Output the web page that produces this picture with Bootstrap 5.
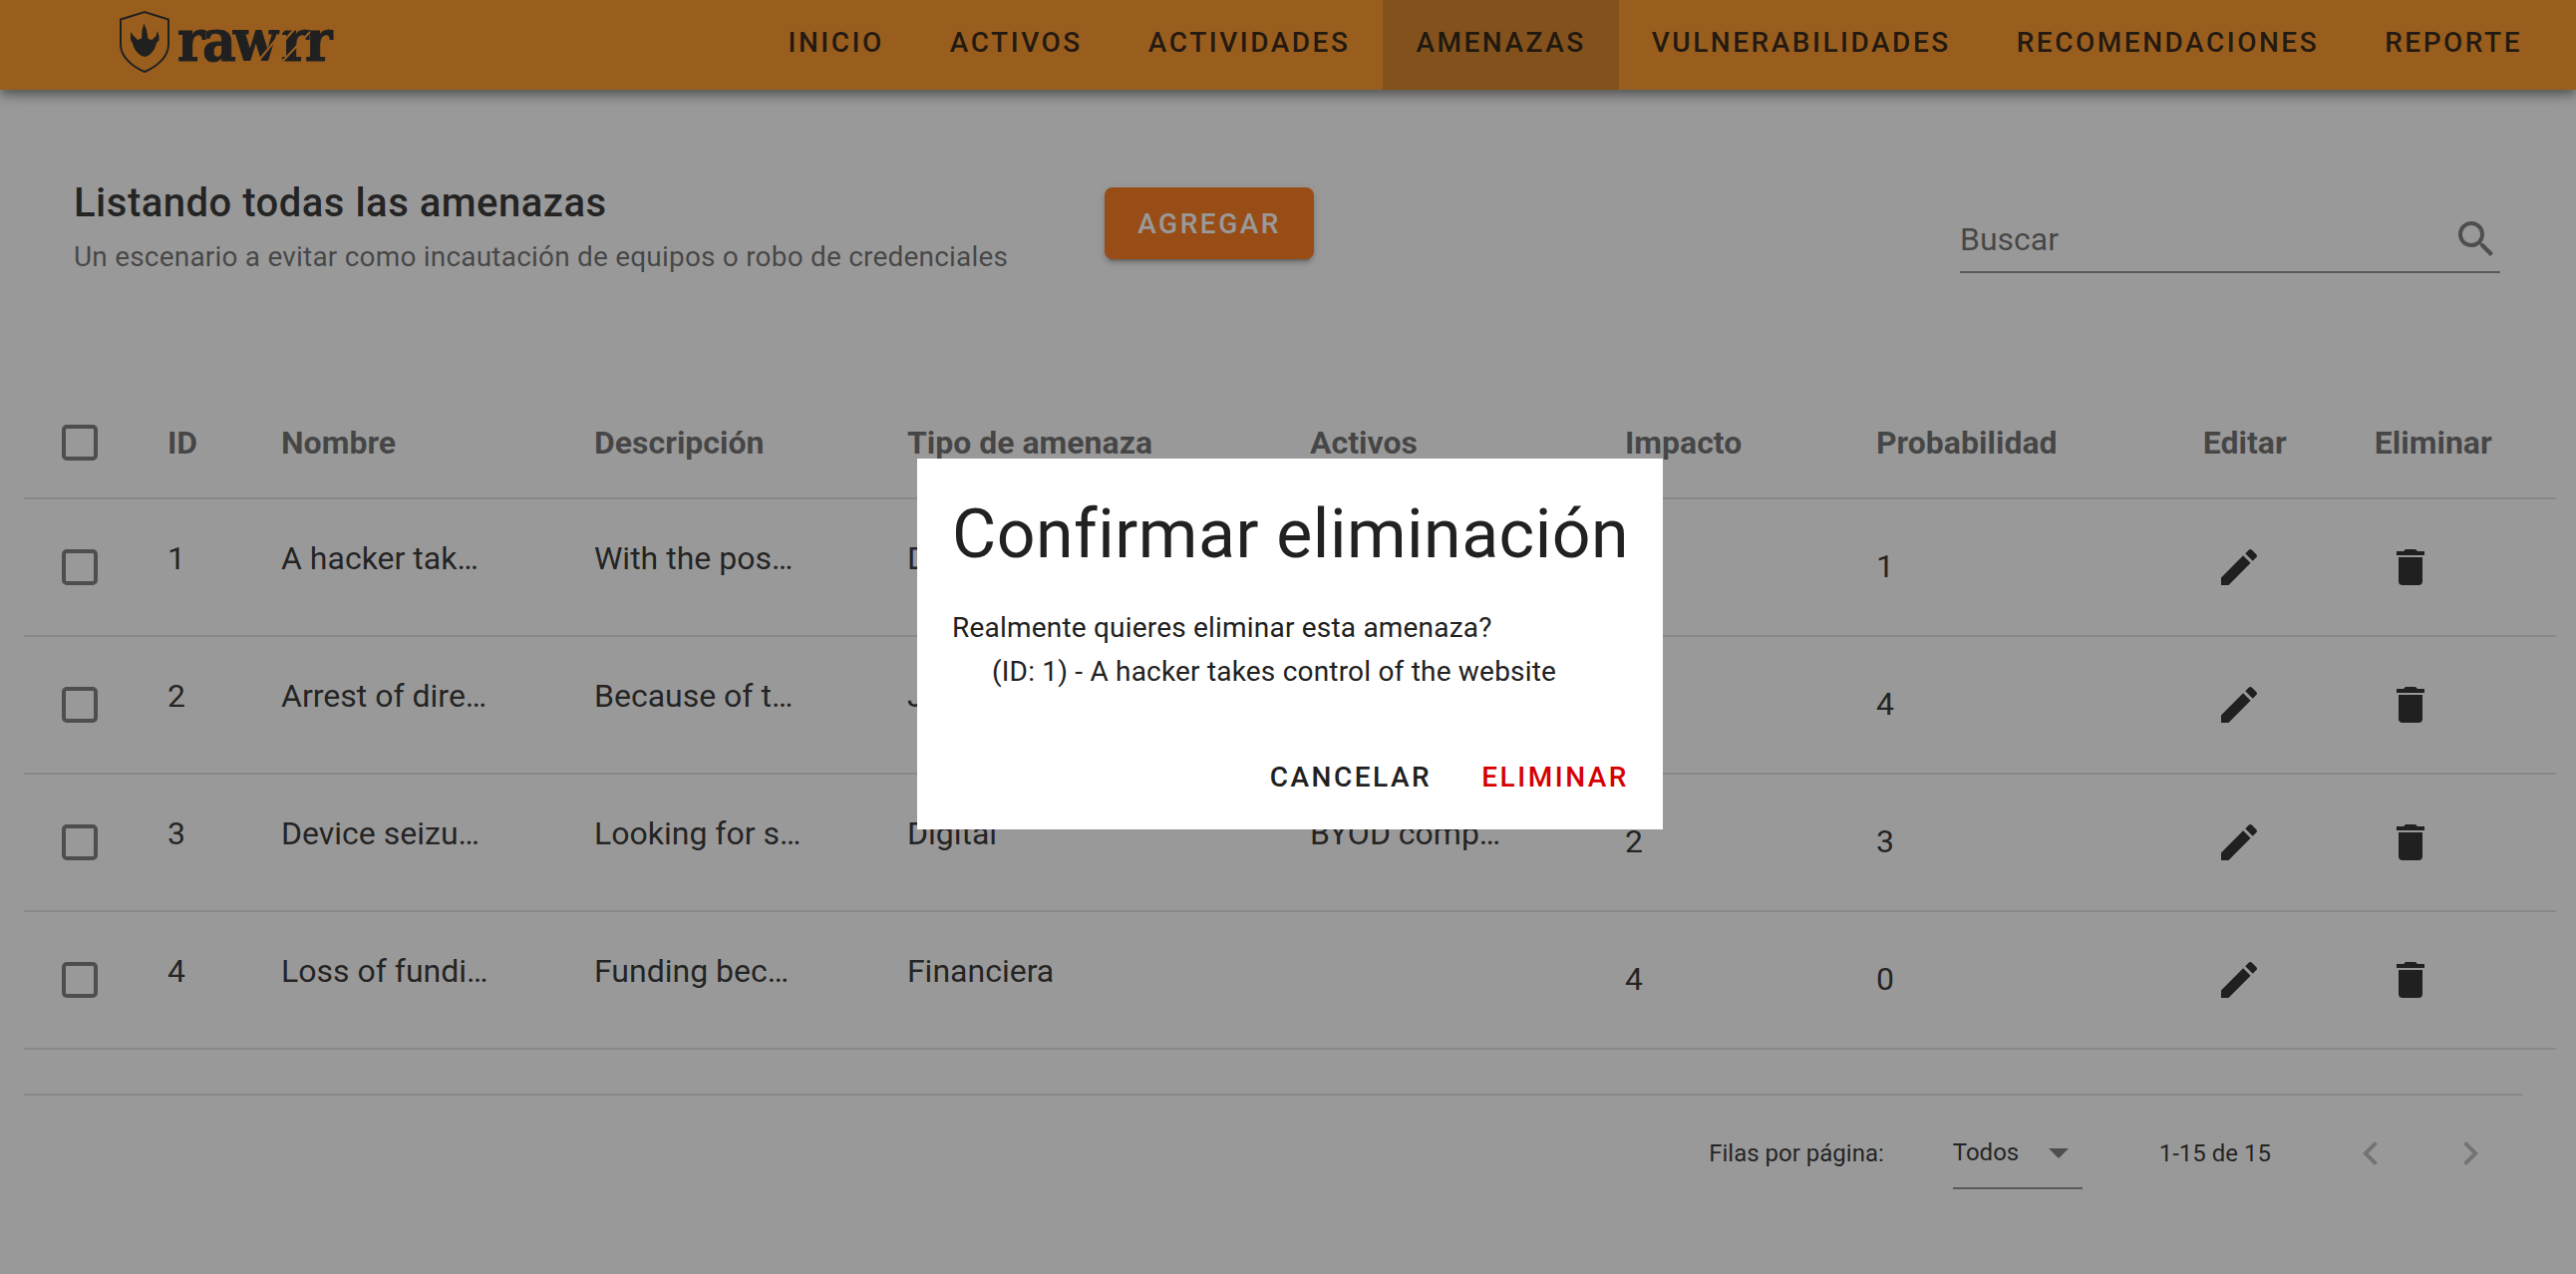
<!DOCTYPE html>
<html lang="es">
<head>
<meta charset="utf-8">
<meta name="viewport" content="width=device-width, initial-scale=1">
<title>Rawrr - Amenazas</title>
<link href="https://cdn.jsdelivr.net/npm/bootstrap@5.3.0/dist/css/bootstrap.min.css" rel="stylesheet">
<style>
  :root { --ink: #212121; --muted: rgba(0, 0, 0, .6); --bar: #ff921c; }
  body { font-family: Roboto, "Liberation Sans", sans-serif; font-size: 32px; line-height: 48px; color: rgba(0, 0, 0, .87); background: #fff; }
  svg.mdi { width: 48px; height: 48px; fill: currentColor; display: block; flex: none; }

  /* top bar */
  .app-bar { background: var(--bar); height: 90px; padding: 0 21px 0 112px; box-shadow: 0 4px 8px -2px rgba(0, 0, 0, .3), 0 8px 10px rgba(0, 0, 0, .2), 0 2px 20px rgba(0, 0, 0, .16); }
  .brand-logo { width: 230px; height: 90px; display: block; }
  .brand-word { font-family: "DejaVu Serif Condensed", "DejaVu Serif", serif; font-stretch: condensed; font-weight: 700; font-size: 58px; }
  .caps { font-size: 28px; line-height: 36px; font-weight: 500; letter-spacing: .09em; text-transform: uppercase; }
  .app-bar .nav-link { color: rgba(0, 0, 0, .87); padding: 25px 33px 29px; }
  .app-bar .nav-link.active { background: rgba(0, 0, 0, .16); }

  /* heading row */
  .list-head { padding: 82px 76px 0 74px; height: 280px; }
  .list-title { font-size: 40px; line-height: 64px; font-weight: 500; letter-spacing: .0125em; }
  .list-sub { font-size: 28px; line-height: 44px; color: var(--muted); letter-spacing: .0071em; }
  .btn-add, .btn-add:hover { background: #fd730f; color: #fff; border: 0; border-radius: 8px; padding: 19px 33px 17px; margin: 16px 0 0 97px; box-shadow: 0 6px 2px -4px rgba(0, 0, 0, .2), 0 4px 4px rgba(0, 0, 0, .14), 0 2px 10px rgba(0, 0, 0, .12); }
  .search-box { width: 542px; height: 86px; border-bottom: 2px solid rgba(0, 0, 0, .46); color: rgba(0, 0, 0, .54); padding-top: 20px; margin: 16px 0 0 auto; }
  .search-box input { border: 0; outline: 0; background: none; padding: 0; min-width: 0; font-size: 32px; line-height: 48px; }
  .search-box input::placeholder { color: var(--muted); opacity: 1; }

  /* listing */
  .list-wrap { padding: 20px 20px 0 24px; }
  .threats { table-layout: fixed; width: 100%; }
  .threats th, .threats td { padding: 0 0 0 32px; border-bottom: 2px solid rgba(0, 0, 0, .12); white-space: nowrap; vertical-align: middle; }
  .threats th { height: 110px; padding-bottom: 2px; color: var(--muted); font-weight: 700; }
  .threats td { height: 138px; }
  .threats td.txt { padding-bottom: 18px; }
  .threats td.num { padding-bottom: 2px; }
  .tick { appearance: none; display: block; width: 36px; height: 36px; margin: 0 0 0 6px; border: 4px solid rgba(0, 0, 0, .54); border-radius: 5px; }
  .icon-btn { border: 0; background: none; padding: 0 12px; color: inherit; display: block; }

  .pager { margin: 44px 34px 0 0; border-top: 2px solid rgba(0, 0, 0, .12); font-size: 24px; line-height: 36px; padding: 22px 28px 0 0; }
  .page-size { width: 130px; height: 72px; border-bottom: 2px solid rgba(0, 0, 0, .46); margin: 0 77px 0 69px; }
  .page-size select { appearance: none; border: 0; background: none; padding: 0; flex: 1; min-width: 0; color: inherit; font-size: 24px; line-height: 36px; }
  .page-size svg { color: rgba(0, 0, 0, .54); }
  .pager-nav { gap: 52px; margin-left: 76px; }
  .pager .icon-btn { padding: 0; color: rgba(0, 0, 0, .27); }

  /* confirmation dialog */
  .modal-backdrop.show { background: #212121; opacity: .46; }
  .modal { padding: 14px 0 0 4px; }
  .modal-dialog { max-width: 748px; }
  .modal-content { border: 0; border-radius: 0; color: var(--ink); padding: 34px 34px 34px 35px; }
  .confirm-title { font-size: 68px; line-height: 84px; font-weight: 400; letter-spacing: .0073em; margin: 0 0 30px; white-space: nowrap; }
  .confirm-text { font-size: 28px; line-height: 44px; letter-spacing: .0071em; }
  .confirm-item { padding-left: 40px; }
  .confirm-actions { gap: 50px; margin-top: 66px; }
  .confirm-actions button { border: 0; background: none; padding: 0; color: var(--ink); }
  .confirm-actions .danger { color: #d50000; }
</style>
<script src="https://cdn.jsdelivr.net/npm/bootstrap@5.3.0/dist/js/bootstrap.bundle.min.js"></script>
</head>
<body>
<svg class="d-none" aria-hidden="true">
  <symbol id="i-pencil" viewBox="0 0 24 24"><path d="M20.71,7.04C21.1,6.65 21.1,6 20.71,5.63L18.37,3.29C18,2.9 17.35,2.9 16.96,3.29L15.12,5.12L18.87,8.87M3,17.25V21H6.75L17.81,9.93L14.06,6.18L3,17.25Z"/></symbol>
  <symbol id="i-delete" viewBox="0 0 24 24"><path d="M19,4H15.5L14.5,3H9.5L8.5,4H5V6H19M6,19A2,2 0 0,0 8,21H16A2,2 0 0,0 18,19V7H6V19Z"/></symbol>
</svg>

<header>
  <nav class="app-bar d-flex justify-content-between align-items-start">
    <a href="#" aria-label="rawrr">
      <svg class="brand-logo" viewBox="0 0 230 90">
        <path d="M9 19.500L33 12L57 19.500V45C57 57 45 67 33 72C21 67 9 57 9 45Z" fill="none" stroke="#212121" stroke-width="2"/>
        <path d="M32.500 23.500L35 30L36.500 39L40.500 40L44.500 36L46 31L47.500 36L47.500 40.500L45 43C43.500 50 39 56 33 57C27 56 22 49 21 43.500L19 40L19 32L22 36L26 40L30 38.500L30.500 30Z" fill="#212121"/>
        <text class="brand-word" x="66 91 122 170 194" y="61" fill="#212121" stroke="#212121" stroke-width="1">rawrr</text>
        <path d="M148 60L176 26M166 49L187 25M171 62L199 32" stroke="#ff921c" stroke-width="2"/>
      </svg>
    </a>
    <ul class="nav flex-nowrap">
      <li><a class="nav-link caps" href="#">Inicio</a></li>
      <li><a class="nav-link caps" href="#">Activos</a></li>
      <li><a class="nav-link caps" href="#">Actividades</a></li>
      <li><a class="nav-link caps active" href="#">Amenazas</a></li>
      <li><a class="nav-link caps" href="#">Vulnerabilidades</a></li>
      <li><a class="nav-link caps" href="#">Recomendaciones</a></li>
      <li><a class="nav-link caps" href="#">Reporte</a></li>
    </ul>
  </nav>
</header>

<main>
  <section class="list-head d-flex align-items-start">
    <div>
      <h1 class="list-title mb-0">Listando todas las amenazas</h1>
      <p class="list-sub mb-0">Un escenario a evitar como incautación de equipos o robo de credenciales</p>
    </div>
    <button type="button" class="btn btn-add caps">Agregar</button>
    <div class="search-box d-flex align-items-center">
      <input class="flex-grow-1" type="search" placeholder="Buscar" aria-label="Buscar">
      <svg class="mdi" viewBox="0 0 24 24"><path d="M9.500,3A6.500,6.500 0 0,1 16,9.500C16,11.110 15.410,12.590 14.440,13.730L14.710,14H15.500L20.500,19L19,20.500L14,15.500V14.710L13.730,14.440C12.590,15.410 11.110,16 9.500,16A6.500,6.500 0 0,1 3,9.500A6.500,6.500 0 0,1 9.500,3M9.500,5C7,5 5,7 5,9.500C5,12 7,14 9.500,14C12,14 14,12 14,9.500C14,7 12,5 9.500,5Z"/></svg>
    </div>
  </section>

  <section class="list-wrap">
    <table class="threats">
      <colgroup>
        <col style="width:4.41%"><col style="width:4.49%"><col style="width:12.36%"><col style="width:12.36%"><col style="width:15.91%"><col style="width:12.44%"><col style="width:9.92%"><col style="width:12.91%"><col style="width:6.77%"><col>
      </colgroup>
      <thead>
        <tr><th><input class="tick" type="checkbox" aria-label="Seleccionar todas"></th><th>ID</th><th>Nombre</th><th>Descripción</th><th>Tipo de amenaza</th><th>Activos</th><th>Impacto</th><th>Probabilidad</th><th>Editar</th><th>Eliminar</th></tr>
      </thead>
      <tbody>
        <tr>
          <td><input class="tick" type="checkbox" aria-label="Seleccionar 1"></td>
          <td class="txt">1</td><td class="txt">A hacker tak…</td><td class="txt">With the pos…</td><td class="txt">Digital</td><td class="txt"></td><td class="num"></td><td class="num">1</td>
          <td><button type="button" class="icon-btn" aria-label="Editar 1"><svg class="mdi"><use href="#i-pencil"/></svg></button></td>
          <td><button type="button" class="icon-btn" aria-label="Eliminar 1"><svg class="mdi"><use href="#i-delete"/></svg></button></td>
        </tr>
        <tr>
          <td><input class="tick" type="checkbox" aria-label="Seleccionar 2"></td>
          <td class="txt">2</td><td class="txt">Arrest of dire…</td><td class="txt">Because of t…</td><td class="txt">Jurídica</td><td class="txt"></td><td class="num"></td><td class="num">4</td>
          <td><button type="button" class="icon-btn" aria-label="Editar 2"><svg class="mdi"><use href="#i-pencil"/></svg></button></td>
          <td><button type="button" class="icon-btn" aria-label="Eliminar 2"><svg class="mdi"><use href="#i-delete"/></svg></button></td>
        </tr>
        <tr>
          <td><input class="tick" type="checkbox" aria-label="Seleccionar 3"></td>
          <td class="txt">3</td><td class="txt">Device seizu…</td><td class="txt">Looking for s…</td><td class="txt">Digital</td><td class="txt">BYOD comp…</td><td class="num">2</td><td class="num">3</td>
          <td><button type="button" class="icon-btn" aria-label="Editar 3"><svg class="mdi"><use href="#i-pencil"/></svg></button></td>
          <td><button type="button" class="icon-btn" aria-label="Eliminar 3"><svg class="mdi"><use href="#i-delete"/></svg></button></td>
        </tr>
        <tr>
          <td><input class="tick" type="checkbox" aria-label="Seleccionar 4"></td>
          <td class="txt">4</td><td class="txt">Loss of fundi…</td><td class="txt">Funding bec…</td><td class="txt">Financiera</td><td class="txt"></td><td class="num">4</td><td class="num">0</td>
          <td><button type="button" class="icon-btn" aria-label="Editar 4"><svg class="mdi"><use href="#i-pencil"/></svg></button></td>
          <td><button type="button" class="icon-btn" aria-label="Eliminar 4"><svg class="mdi"><use href="#i-delete"/></svg></button></td>
        </tr>
      </tbody>
    </table>

    <div class="pager d-flex justify-content-end align-items-center">
      <label for="page-size">Filas por página:</label>
      <div class="page-size d-flex align-items-center">
        <select id="page-size"><option>Todos</option></select>
        <svg class="mdi" viewBox="0 0 24 24"><path d="M7,10L12,15L17,10H7Z"/></svg>
      </div>
      <span>1-15 de 15</span>
      <div class="pager-nav d-flex">
        <button type="button" class="icon-btn" disabled aria-label="Página anterior"><svg class="mdi" viewBox="0 0 24 24"><path d="M15.410,16.580L10.830,12L15.410,7.410L14,6L8,12L14,18L15.410,16.580Z"/></svg></button>
        <button type="button" class="icon-btn" disabled aria-label="Página siguiente"><svg class="mdi" viewBox="0 0 24 24"><path d="M8.590,16.580L13.170,12L8.590,7.410L10,6L16,12L10,18L8.590,16.580Z"/></svg></button>
      </div>
    </div>
  </section>
</main>

<div class="modal-backdrop show"></div>
<div class="modal show d-block" role="dialog" aria-modal="true" aria-labelledby="confirm-title">
  <div class="modal-dialog modal-dialog-centered">
    <div class="modal-content">
      <h2 class="confirm-title" id="confirm-title">Confirmar eliminación</h2>
      <div class="confirm-text">
        <p class="mb-0">Realmente quieres eliminar esta amenaza?</p>
        <p class="confirm-item mb-0">(ID: 1) - A hacker takes control of the website</p>
      </div>
      <div class="confirm-actions d-flex justify-content-end">
        <button type="button" class="caps">Cancelar</button>
        <button type="button" class="caps danger">Eliminar</button>
      </div>
    </div>
  </div>
</div>
</body>
</html>
